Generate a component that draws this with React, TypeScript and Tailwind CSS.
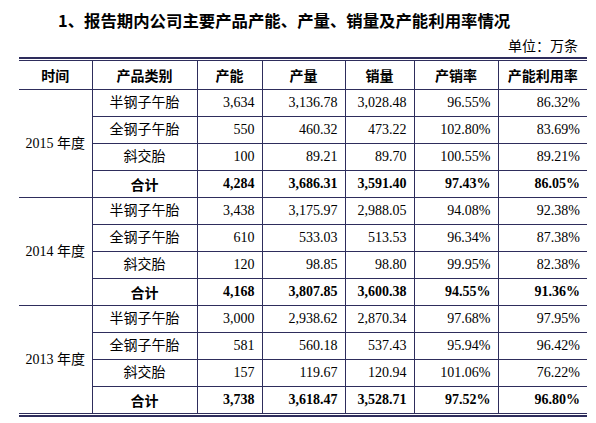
import React from "react";

type Row = [string, string, string, string, string, string];

const sections: { year: string; rows: Row[] }[] = [
  {
    year: "2015 年度",
    rows: [
      ["半钢子午胎", "3,634", "3,136.78", "3,028.48", "96.55%", "86.32%"],
      ["全钢子午胎", "550", "460.32", "473.22", "102.80%", "83.69%"],
      ["斜交胎", "100", "89.21", "89.70", "100.55%", "89.21%"],
      ["合计", "4,284", "3,686.31", "3,591.40", "97.43%", "86.05%"],
    ],
  },
  {
    year: "2014 年度",
    rows: [
      ["半钢子午胎", "3,438", "3,175.97", "2,988.05", "94.08%", "92.38%"],
      ["全钢子午胎", "610", "533.03", "513.53", "96.34%", "87.38%"],
      ["斜交胎", "120", "98.85", "98.80", "99.95%", "82.38%"],
      ["合计", "4,168", "3,807.85", "3,600.38", "94.55%", "91.36%"],
    ],
  },
  {
    year: "2013 年度",
    rows: [
      ["半钢子午胎", "3,000", "2,938.62", "2,870.34", "97.68%", "97.95%"],
      ["全钢子午胎", "581", "560.18", "537.43", "95.94%", "96.42%"],
      ["斜交胎", "157", "119.67", "120.94", "101.06%", "76.22%"],
      ["合计", "3,738", "3,618.47", "3,528.71", "97.52%", "96.80%"],
    ],
  },
];

const headers = ["时间", "产品类别", "产能", "产量", "销量", "产销率", "产能利用率"];
const widths = ["w-[73px]", "w-[105px]", "w-[65px]", "w-[83px]", "w-[69px]", "w-[84px]", "w-[89px]"];

const serif = "font-['Liberation_Serif','Noto_Sans_CJK_SC',serif]";
const sans = "font-['Noto_Sans_CJK_SC',sans-serif]";

export default function App() {
  return (
    <div className="w-[596px] h-[423px] bg-white text-black overflow-hidden">
      <div className={`pt-[8px] pl-[58px] text-[16.4px] leading-[24px] font-bold whitespace-nowrap ${sans}`}>
        1、报告期内公司主要产品产能、产量、销量及产能利用率情况
      </div>
      <div className={`mt-[5px] pr-[18px] text-right text-[14px] leading-[20px] ${serif}`}>
        单位：万条
      </div>
      <div className="ml-[19px] w-[568px]">
        <div className="h-[2px] bg-[#2e2d5c]" />
        <div className="h-[1px]" />
        <table className="w-[568px] table-fixed border-collapse">
          <colgroup>
            {widths.map((w, i) => (
              <col key={i} className={w} />
            ))}
          </colgroup>
          <thead>
            <tr className="h-[29px]">
              {headers.map((h, i) => (
                <th
                  key={h}
                  className={`p-0 text-center text-[14px] leading-[18px] font-bold border-t border-b border-[#2e2d5c] ${sans} ${
                    i < headers.length - 1 ? "border-r" : ""
                  }`}
                >
                  {h}
                </th>
              ))}
            </tr>
          </thead>
          <tbody>
            {sections.map((s) =>
              s.rows.map((r, ri) => {
                const total = ri === 3;
                return (
                  <tr key={s.year + ri} className="h-[27px]">
                    {ri === 0 && (
                      <td
                        rowSpan={4}
                        className={`p-0 text-center text-[14px] border-b border-r border-[#2e2d5c] ${serif}`}
                      >
                        {s.year}
                      </td>
                    )}
                    <td
                      className={`p-0 text-center text-[14px] leading-[18px] border-b border-r border-[#2e2d5c] ${
                        total ? `font-bold ${sans}` : serif
                      }`}
                    >
                      {r[0]}
                    </td>
                    {r.slice(1).map((v, ci) => (
                      <td
                        key={ci}
                        className={`p-0 pr-[7px] text-right text-[14px] leading-[18px] border-b border-[#2e2d5c] ${serif} ${
                          total ? "font-bold" : ""
                        } ${ci < 4 ? "border-r" : ""}`}
                      >
                        {v}
                      </td>
                    ))}
                  </tr>
                );
              })
            )}
          </tbody>
        </table>
        <div className="h-[1px]" />
        <div className="h-[2px] bg-[#2e2d5c]" />
      </div>
    </div>
  );
}
